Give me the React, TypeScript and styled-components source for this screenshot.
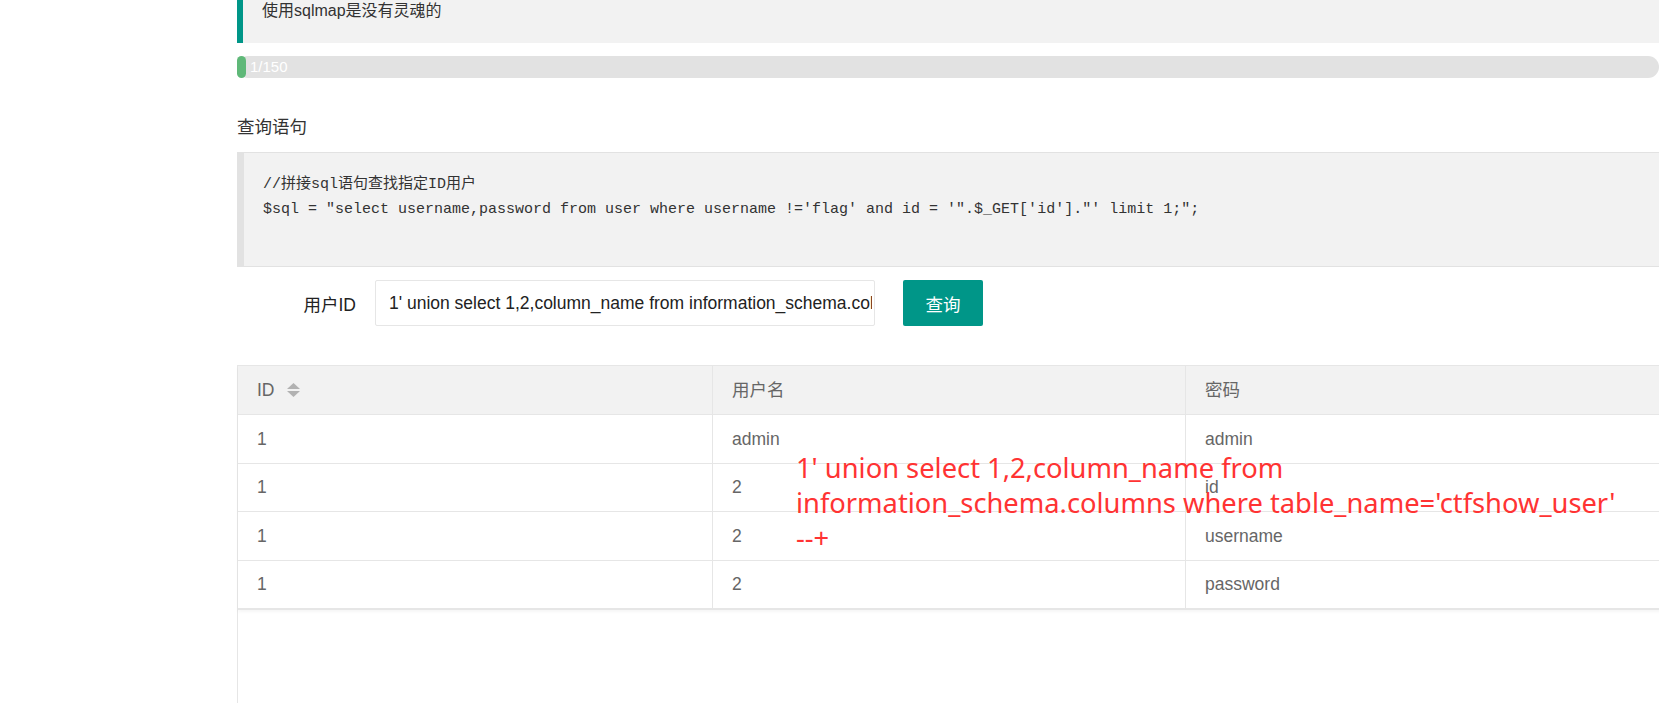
import { FC } from "react";
import styled, { createGlobalStyle } from "styled-components";

const GlobalStyle = createGlobalStyle`
  html, body {
    margin: 0;
    padding: 0;
    background: #fff;
    overflow: hidden;
  }
  body {
    font-family: "Liberation Sans", "Noto Sans CJK SC", sans-serif;
    color: #333;
  }
`;

// page is scrolled a little and wider than the window, so the quote starts
// above the viewport and the blocks run past the right edge
const Page = styled.div`
  margin: -22px 0 0 237px;
  width: 1440px;
`;

const Quote = styled.blockquote`
  margin: 0;
  padding: 19px 19px;
  border-left: 6px solid #009688;
  background: #f2f2f2;
  font-size: 16px;
  line-height: 27px;
  color: #333;
`;

const Progress = styled.div`
  position: relative;
  margin-top: 13px;
  width: 1422px;
  height: 22px;
  border-radius: 11px;
  background: #e2e2e2;
`;

const ProgressBar = styled.div`
  height: 22px;
  border-radius: 11px;
  background: #5fb878;
`;

const ProgressText = styled.span`
  position: absolute;
  left: 13px;
  top: 0;
  line-height: 22px;
  font-size: 15px;
  color: #fff;
`;

const SectionTitle = styled.h3`
  margin: 37px 0 0;
  font-size: 17.5px;
  font-weight: normal;
  line-height: 25px;
  color: #333;
`;

const CodeBlock = styled.pre`
  margin: 12px 0 0;
  padding: 19px;
  border: 1px solid #e2e2e2;
  border-left-width: 7px;
  background: #f2f2f2;
  font-family: "Liberation Mono", "Noto Sans CJK SC", monospace;
  font-size: 15px;
  line-height: 25px;
  height: 75px;
  color: #333;
  overflow: hidden;
  white-space: pre;
`;

const FormRow = styled.div`
  display: flex;
  align-items: center;
  margin-top: 13px;
  height: 46px;
`;

const FormLabel = styled.label`
  width: 119px;
  padding-right: 19px;
  text-align: right;
  font-size: 17.5px;
  color: #222;
`;

const TextInput = styled.input`
  box-sizing: border-box;
  width: 500px;
  height: 46px;
  padding: 0 2px 0 13px;
  border: 1px solid #e6e6e6;
  border-radius: 2px;
  background: #fff;
  font-family: "Liberation Sans", sans-serif;
  font-size: 17.5px;
  color: #222;
  outline: none;
`;

const SubmitButton = styled.button`
  margin-left: 28px;
  height: 46px;
  padding: 0 22.5px;
  border: none;
  border-radius: 2px;
  background: #009688;
  color: #fff;
  font-family: "Liberation Sans", "Noto Sans CJK SC", sans-serif;
  font-size: 17.5px;
  cursor: pointer;
`;

const TableBox = styled.div`
  position: relative;
  margin-top: 39px;
  height: 400px;
  border-top: 1px solid #e6e6e6;
  border-left: 1px solid #e6e6e6;
`;

const Table = styled.table`
  width: 100%;
  table-layout: fixed;
  border-collapse: separate;
  border-spacing: 0;
  font-size: 17.5px;
  color: #666;
  box-shadow: 0 2px 3px rgba(0, 0, 0, 0.04);
`;

const HeadCell = styled.th`
  padding: 14px 19px;
  line-height: 20px;
  text-align: left;
  font-weight: normal;
  background: #f2f2f2;
  border-bottom: 1px solid #e6e6e6;
  border-right: 1px solid #e6e6e6;
`;

const Cell = styled.td<{ $last?: boolean }>`
  padding: 13.75px 19px;
  line-height: 20px;
  border-bottom: ${(p) => (p.$last ? "2px" : "1px")} solid #e6e6e6;
  border-right: 1px solid #e6e6e6;
  white-space: nowrap;
`;

const HeadInner = styled.span`
  display: inline-flex;
  align-items: center;
  gap: 12px;
`;

const SortIcon: FC = () => (
  <svg width="13" height="14" viewBox="0 0 13 14">
    <polygon points="0,6 6.5,0 13,6" fill="#b2b2b2" />
    <polygon points="0,8 13,8 6.5,14" fill="#b2b2b2" />
  </svg>
);

const Annotation = styled.div`
  position: absolute;
  left: 558px;
  top: 84px;
  font-family: "Noto Sans", sans-serif;
  font-size: 27.3px;
  line-height: 35px;
  color: #ff3333;
  white-space: nowrap;
  pointer-events: none;
`;

const rows = [
  ["1", "admin", "admin"],
  ["1", "2", "id"],
  ["1", "2", "username"],
  ["1", "2", "password"],
];

const total = 150;
const current = 1;

const codeText = `//拼接sql语句查找指定ID用户
$sql = "select username,password from user where username !='flag' and id = '".$_GET['id']."' limit 1;";`;

export default function App() {
  return (
    <>
      <GlobalStyle />
      <Page>
        <Quote>使用sqlmap是没有灵魂的</Quote>

        <Progress>
          <ProgressBar style={{ width: `${(current / total) * 100}%` }} />
          <ProgressText>
            {current}/{total}
          </ProgressText>
        </Progress>

        <SectionTitle>查询语句</SectionTitle>
        <CodeBlock>{codeText}</CodeBlock>

        <FormRow>
          <FormLabel>用户ID</FormLabel>
          <TextInput
            readOnly
            value="1' union select 1,2,column_name from information_schema.columns where table_name='ctfshow_user' --+"
          />
          <SubmitButton>查询</SubmitButton>
        </FormRow>

        <TableBox>
          <Table>
            <colgroup>
              <col style={{ width: 475 }} />
              <col style={{ width: 473 }} />
              <col />
            </colgroup>
            <thead>
              <tr>
                <HeadCell>
                  <HeadInner>
                    ID
                    <SortIcon />
                  </HeadInner>
                </HeadCell>
                <HeadCell>用户名</HeadCell>
                <HeadCell>密码</HeadCell>
              </tr>
            </thead>
            <tbody>
              {rows.map((r, i) => (
                <tr key={i}>
                  {r.map((c, j) => (
                    <Cell key={j} $last={i === rows.length - 1}>
                      {c}
                    </Cell>
                  ))}
                </tr>
              ))}
            </tbody>
          </Table>
          <Annotation>
            1' union select 1,2,column_name from
            <br />
            information_schema.columns where table_name='ctfshow_user'
            <br />
            --+
          </Annotation>
        </TableBox>
      </Page>
    </>
  );
}
